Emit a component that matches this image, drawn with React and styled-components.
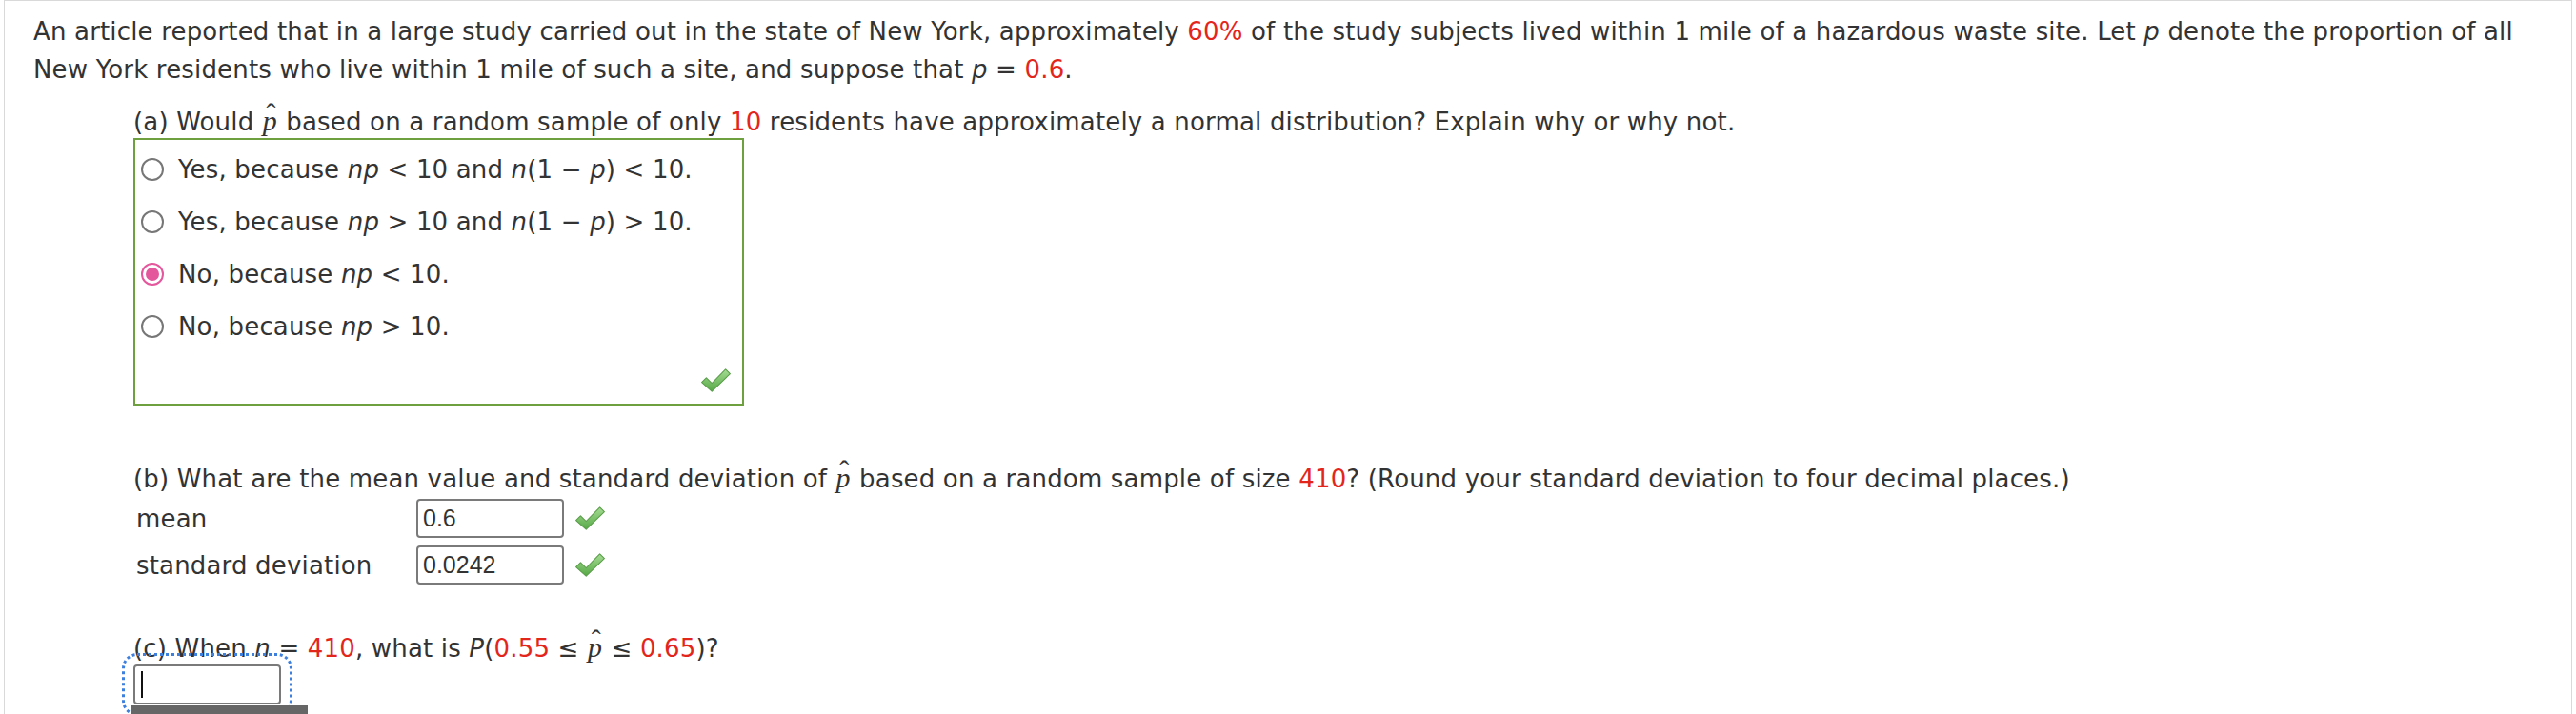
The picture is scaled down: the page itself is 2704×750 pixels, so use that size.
import React from "react";
import styled, { createGlobalStyle } from "styled-components";

const GlobalStyle = createGlobalStyle`
  html, body {
    margin: 0;
    padding: 0;
    background: #ffffff;
  }
  body {
    font-family: "DejaVu Sans", Verdana, sans-serif;
    color: #333333;
  }
`;

const Page = styled.div`
  margin-left: 4px;
  width: 2696px;
  min-height: 750px;
  box-sizing: border-box;
  border: 1px solid #d9d9d9;
  border-bottom: none;
  padding: 12px 40px 0 30px;
  font-size: 26px;
  letter-spacing: 0.17px;
  line-height: 40px;
`;

const Intro = styled.p`
  margin: 0;
`;

const Part = styled.section`
  padding-left: 105px;
  margin-top: ${(p) => p.$top}px;
`;

const PartTitle = styled.p`
  margin: 0;
  line-height: 34px;
`;

const Red = styled.span`
  color: #e3261c;
`;

const Var = styled.i`
  font-style: italic;
`;

const HatP = styled.span`
  position: relative;
  display: inline-block;
  font-family: "Liberation Serif", "Times New Roman", serif;
  font-style: italic;
  font-size: 1.15em;
  line-height: 1;
  padding: 0 1px;

  &::before {
    content: "\\02C6";
    position: absolute;
    left: 50%;
    top: -0.26em;
    transform: translateX(-38%);
    font-style: normal;
  }
`;

const AnswerBox = styled.div`
  width: 641px;
  box-sizing: border-box;
  border: 2px solid #6fa040;
  padding-top: 3px;
`;

const Option = styled.label`
  display: flex;
  align-items: center;
  gap: 15px;
  height: 55px;
  padding-left: 6px;
  line-height: 1;
`;

const Radio = styled.span`
  flex: none;
  display: flex;
  align-items: center;
  justify-content: center;
  width: 24px;
  height: 24px;
  box-sizing: border-box;
  border-radius: 50%;
  border: 2px solid ${(p) => (p.$checked ? "#e4579c" : "#777777")};
  background: #fff;

  &::after {
    content: "";
    display: ${(p) => (p.$checked ? "block" : "none")};
    width: 14px;
    height: 14px;
    border-radius: 50%;
    background: #e4579c;
  }
`;

const BoxFooter = styled.div`
  display: flex;
  justify-content: flex-end;
  padding: 16px 11px 11px 0;
`;

const FieldGrid = styled.div`
  display: grid;
  grid-template-columns: 286px auto 1fr;
  align-items: center;
  column-gap: 11px;
  row-gap: 8px;
  margin-top: 4px;
`;

const FieldLabel = styled.span`
  line-height: 1;
  padding-left: 3px;
`;

const Field = styled.input`
  width: 155px;
  height: 41px;
  box-sizing: border-box;
  border: 2px solid #7a7a7a;
  border-radius: 4px;
  padding: 0 5px;
  margin: 0;
  font-family: "Liberation Sans", Arial, sans-serif;
  font-size: 25px;
  color: #333333;
  background: #fff;
  outline: none;
`;

const ActiveField = styled.div`
  display: flex;
  align-items: center;
  width: 155px;
  height: 42px;
  box-sizing: border-box;
  border: 2px solid #7a7a7a;
  border-radius: 4px;
  padding-left: 6px;
  background: #fff;
  outline: 3px dotted #3c7fdc;
  outline-offset: 9px;
`;

const Caret = styled.span`
  width: 2px;
  height: 28px;
  background: #111;
`;

const KeyBar = styled.div`
  position: relative;
  width: 185px;
  height: 9px;
  margin-left: -2px;
  margin-top: 1px;
  background: #666666;
`;

const Check = () => (
  <svg width="33" height="27" viewBox="0 0 31 25">
    <defs>
      <linearGradient id="chk" x1="0" y1="0" x2="0" y2="1">
        <stop offset="0" stopColor="#a6dc94" />
        <stop offset="1" stopColor="#55a845" />
      </linearGradient>
    </defs>
    <path
      d="M1.5 14.5 L6 10 L11.5 15.5 L25 1.5 L29.5 6 L11.5 23.5 Z"
      fill="url(#chk)"
      stroke="#5a9e4a"
      strokeWidth="1"
      strokeLinejoin="round"
    />
  </svg>
);

const options = [
  { id: 1, text: <>Yes, because <Var>np</Var> &lt; 10 and <Var>n</Var>(1 − <Var>p</Var>) &lt; 10.</> },
  { id: 2, text: <>Yes, because <Var>np</Var> &gt; 10 and <Var>n</Var>(1 − <Var>p</Var>) &gt; 10.</> },
  { id: 3, text: <>No, because <Var>np</Var> &lt; 10.</>, checked: true },
  { id: 4, text: <>No, because <Var>np</Var> &gt; 10.</> },
];

const App = () => {
  return (
    <>
      <GlobalStyle />
      <Page>
        <Intro>
          An article reported that in a large study carried out in the state of New York, approximately{" "}
          <Red>60%</Red> of the study subjects lived within 1 mile of a hazardous waste site. Let{" "}
          <Var>p</Var> denote the proportion of all New York residents who live within 1 mile of such a
          site, and suppose that <Var>p</Var> = <Red>0.6</Red>.
        </Intro>

        <Part $top={18}>
          <PartTitle>
            (a) Would <HatP>p</HatP> based on a random sample of only <Red>10</Red> residents have
            approximately a normal distribution? Explain why or why not.
          </PartTitle>
          <AnswerBox>
            {options.map((o) => (
              <Option key={o.id}>
                <Radio $checked={o.checked} />
                <span>{o.text}</span>
              </Option>
            ))}
            <BoxFooter>
              <Check />
            </BoxFooter>
          </AnswerBox>
        </Part>

        <Part $top={60}>
          <PartTitle>
            (b) What are the mean value and standard deviation of <HatP>p</HatP> based on a random sample
            of size <Red>410</Red>? (Round your standard deviation to four decimal places.)
          </PartTitle>
          <FieldGrid>
            <FieldLabel>mean</FieldLabel>
            <Field defaultValue="0.6" readOnly />
            <Check />
            <FieldLabel>standard deviation</FieldLabel>
            <Field defaultValue="0.0242" readOnly />
            <Check />
          </FieldGrid>
        </Part>

        <Part $top={50}>
          <PartTitle>
            (c) When <Var>n</Var> = <Red>410</Red>, what is <Var>P</Var>(<Red>0.55</Red> ≤ <HatP>p</HatP> ≤{" "}
            <Red>0.65</Red>)?
          </PartTitle>
          <ActiveField>
            <Caret />
          </ActiveField>
          <KeyBar />
        </Part>
      </Page>
    </>
  );
};

export default App;
